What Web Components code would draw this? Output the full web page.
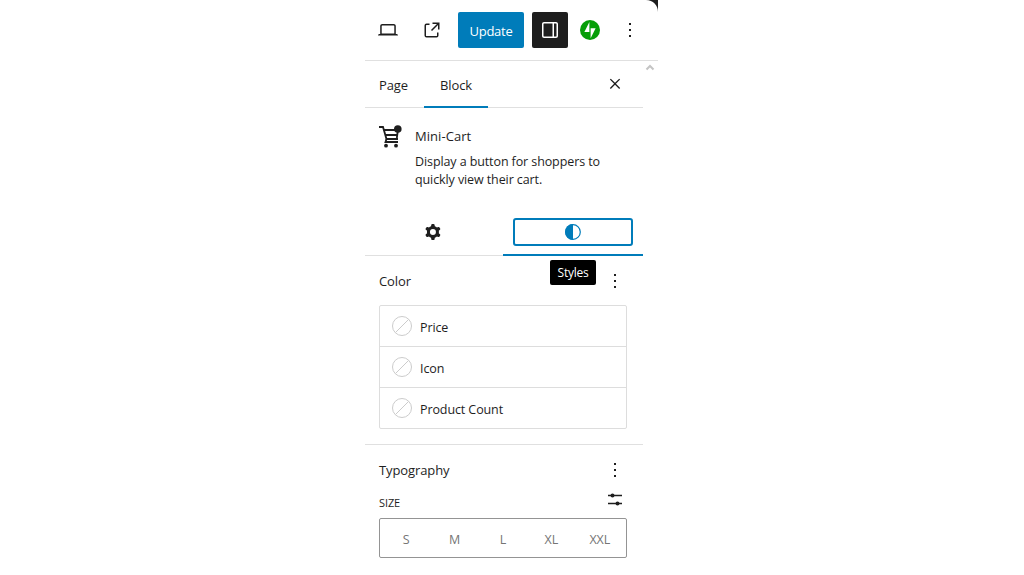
<!DOCTYPE html>
<html><head><meta charset="utf-8">
<style>
html,body{margin:0;background:#fff;height:100%;overflow:hidden}
body{font-family:"Open Sans","Noto Sans",sans-serif;font-size:12.5px;letter-spacing:-.1px;color:#1e1e1e}
</style></head><body>
<wp-app>
<top-bar></top-bar>
<side-panel>
<panel-tabs></panel-tabs>
<block-card></block-card>
<inspector-tabs></inspector-tabs>
<color-panel></color-panel>
<type-panel></type-panel>
</side-panel>
</wp-app>
<script>
const DOTS='<svg width="24" height="24" viewBox="0 0 24 24" fill="#1e1e1e"><path d="M13 19h-2v-2h2v2zm0-6h-2v-2h2v2zm0-6h-2V5h2v2z"/></svg>';
function def(name,html){customElements.define(name,class extends HTMLElement{constructor(){super();this.attachShadow({mode:'open'}).innerHTML=html;}});}
def('wp-app',`<style>:host{display:block;width:293px;margin-left:365px;position:relative;height:575px;overflow:hidden}
.corner{position:absolute;right:0;top:0;display:block}
.chev{position:absolute;left:280px;top:63px}</style>
<svg class="corner" width="12" height="12" viewBox="0 0 12 12"><path d="M0 0H12V12C12 5 7 0 0 0z" fill="#1e1e1e"/></svg>
<slot></slot>
<svg class="chev" width="10" height="8" viewBox="0 0 10 8"><path d="M1.5 6.500 5 3l3.500 3.500" fill="none" stroke="#c4c4c4" stroke-width="2"/></svg>`);
def('top-bar',`<style>:host{display:flex;align-items:center;height:60px;border-bottom:1px solid #e0e0e0;box-sizing:content-box}
.ic{width:24px;height:24px;display:block}
.a{margin-left:11px}.b{margin-left:20px}
.u{margin-left:14px;width:66px;height:36px;padding-top:2px;box-sizing:border-box;background:#007cba;color:#fff;border-radius:2px;display:flex;align-items:center;justify-content:center;font-size:13px;letter-spacing:-.25px}
.s{margin-left:8px;width:36px;height:36px;background:#1e1e1e;border-radius:2px;display:flex;align-items:center;justify-content:center}
.j{margin-left:12px;width:20px;height:20px;display:block}
.d{margin-left:18px;width:24px;height:24px}</style>
<svg class="ic a" viewBox="0 0 24 24" fill="#1e1e1e"><path d="M20.5 16h-.7V8c0-1.1-.9-2-2-2H6.2c-1.1 0-2 .9-2 2v8h-.7c-.8 0-1.5.7-1.5 1.5h20c0-.8-.7-1.5-1.5-1.5zM5.700 8c0-.3.2-.5.5-.5h11.600c.3 0 .5.2.5.5v7.600H5.700V8z"/></svg>
<svg class="ic b" viewBox="0 0 24 24" fill="#1e1e1e"><path d="M19.500 4.500h-7V6h4.440l-5.970 6.030 1.060 1.060L18 7.060v4.440h1.500v-7zm-13 1a2 2 0 0 0-2 2v10a2 2 0 0 0 2 2h10a2 2 0 0 0 2-2v-3H17v3a.5.5 0 0 1-.5.5h-10a.5.5 0 0 1-.5-.5v-10a.5.5 0 0 1 .5-.5h3V5.500h-3z"/></svg>
<div class="u">Update</div>
<div class="s"><svg class="ic" viewBox="0 0 24 24" fill="#fff"><path d="M18 4H6c-1.100 0-2 .9-2 2v12c0 1.100.9 2 2 2h12c1.100 0 2-.9 2-2V6c0-1.100-.9-2-2-2zM6 18.500c-.3 0-.5-.2-.5-.5V6c0-.3.2-.5.5-.5h8.500v13H6zm12.500-.5c0 .3-.2.500-.5.500h-2v-13h2c.3 0 .5.2.5.5v12z"/></svg></div>
<svg class="j" viewBox="0 0 32 32"><circle cx="16" cy="16" r="16" fill="#069e08"/><polygon fill="#fff" points="15,19 7,19 15,3"/><polygon fill="#fff" points="17,29 17,13 25,13"/></svg>
<div class="d">${DOTS}</div>`);
def('side-panel',`<style>:host{display:block;width:278px}</style><slot></slot>`);
def('panel-tabs',`<style>:host{display:flex;height:46px;border-bottom:1px solid #e0e0e0;align-items:stretch;position:relative}
.t{display:flex;align-items:center;box-sizing:border-box;height:47px;padding-top:1px}
.p{margin-left:14px;width:45px;font-size:13px;letter-spacing:-.15px}
.k{width:64px;justify-content:center;border-bottom:2px solid #007cba;margin-bottom:-1px;font-weight:500;font-size:13px;letter-spacing:-.1px;padding-top:3px}
svg{margin:11px 0 0 auto;margin-right:16px;display:block}</style>
<div class="t p">Page</div><div class="t k">Block</div>
<svg width="24" height="24" viewBox="0 0 24 24" fill="#1e1e1e"><path d="M13 11.800l4.400-4.400-1-1-4.400 4.400-4.400-4.400-1 1 4.400 4.400-4.400 4.400 1 1 4.400-4.400 4.400 4.400 1-1z" transform="translate(12 11.800) scale(.95) translate(-12 -11.800)"/></svg>`);
def('block-card',`<style>:host{display:flex;padding:16px 14px 0 13px;height:94px;box-sizing:content-box}
svg{flex:none;display:block;margin-right:13px}
h2{margin:2px 0 7px;font-size:13px;letter-spacing:.05px;line-height:20px;font-weight:500}
p{margin:0;line-height:18px;width:205px}</style>
<svg width="24" height="24" viewBox="0 0 24 24" fill="none" stroke="#1e1e1e"><path d="M1 3H5L8.500 15H20" stroke-width="1.800"/><path d="M6 6H18M7.500 11H19" stroke-width="1.800"/><path d="M19.800 7 18.800 14" stroke-width="1.800"/><path d="M8.500 15 7.500 18H20" stroke-width="1.800"/><circle cx="8" cy="21.700" r="1.900" fill="#1e1e1e" stroke="none"/><circle cx="18" cy="21.700" r="1.900" fill="#1e1e1e" stroke="none"/><circle cx="19.800" cy="5" r="3.800" fill="#1e1e1e" stroke="none"/></svg>
<div><h2>Mini-Cart</h2><p>Display a button for shoppers to quickly view their cart.</p></div>`);
def('inspector-tabs',`<style>:host{display:flex;height:37px;border-bottom:1px solid #e0e0e0;position:relative;box-sizing:content-box}
.g{width:136px;display:flex;justify-content:center;box-sizing:border-box;padding-top:2px}
.s{box-sizing:border-box;border-bottom:2px solid #007cba;height:38px;margin-bottom:-1px;padding:0 10px;width:140px;margin-left:2px}
.f{width:120px;height:28px;border:2px solid #007cba;border-radius:3px;box-sizing:border-box;display:flex;align-items:center;justify-content:center}
svg{display:block}</style>
<div class="g"><svg width="24" height="24" viewBox="0 0 24 24" fill="#1e1e1e"><path fill-rule="evenodd" d="M10.289 4.836A1 1 0 0 1 11.275 4h1.306a1 1 0 0 1 .987.836l.244 1.466c.787.26 1.503.679 2.108 1.218l1.393-.522a1 1 0 0 1 1.216.437l.653 1.130a1 1 0 0 1-.23 1.273l-1.148.944a6.025 6.025 0 0 1 0 2.435l1.149.946a1 1 0 0 1 .23 1.272l-.653 1.130a1 1 0 0 1-1.216.437l-1.394-.522c-.605.54-1.320.958-2.108 1.218l-.244 1.466a1 1 0 0 1-.987.836h-1.306a1 1 0 0 1-.986-.836l-.244-1.466a5.995 5.995 0 0 1-2.108-1.218l-1.394.522a1 1 0 0 1-1.217-.436l-.653-1.131a1 1 0 0 1 .23-1.272l1.149-.946a6.026 6.026 0 0 1 0-2.435l-1.148-.944a1 1 0 0 1-.23-1.272l.653-1.131a1 1 0 0 1 1.217-.437l1.393.522a5.994 5.994 0 0 1 2.108-1.218l.244-1.466zM14.929 12a3 3 0 1 1-6 0 3 3 0 0 1 6 0z"/></svg></div>
<div class="s"><div class="f"><svg width="24" height="24" viewBox="0 0 24 24"><circle cx="12" cy="12" r="7.300" fill="#fff" stroke="#007cba" stroke-width="1.200"/><path d="M12 4a8 8 0 0 0 0 16z" fill="#007cba"/></svg></div></div>`);
def('panel-head',`<style>:host{display:flex;align-items:center;justify-content:space-between;height:24px;font-weight:500;font-size:13px;letter-spacing:-.1px}
svg,div{display:block}</style><span><slot></slot></span><div>${DOTS}</div>`);
def('color-row',`<style>:host{display:flex;align-items:center;height:40px;padding-left:12px}
:host(:not(:last-child)){border-bottom:1px solid #ddd}
svg{display:block;margin-right:8px}
span{padding-top:2px}</style>
<svg width="20" height="20" viewBox="0 0 20 20"><circle cx="10" cy="10" r="9.500" fill="#fff" stroke="#ccc"/><path d="M3.500 16.500 16.500 3.500" stroke="#ccc"/></svg><span><slot></slot></span>`);
def('color-panel',`<style>:host{display:block;padding:13px 14px 15px;border-bottom:1px solid #e0e0e0;position:relative;height:160px}
.list{margin-top:12px;width:248px;border:1px solid #ddd;border-radius:2px;box-sizing:border-box;height:124px}
.tip{position:absolute;left:185px;top:4px;width:46px;height:25px;background:#000;color:#fff;border-radius:2px;font-size:12px;letter-spacing:-.25px;display:flex;align-items:center;justify-content:center}</style>
<panel-head style="display:flex;width:248px">Color</panel-head>
<div class="list"><color-row>Price</color-row><color-row>Icon</color-row><color-row>Product Count</color-row></div>
<div class="tip">Styles</div>`);
def('type-panel',`<style>:host{display:block;padding:13px 14px 0}
.size{display:flex;justify-content:space-between;margin-top:12px;height:24px;width:248px;font-size:11px;font-weight:500;text-transform:uppercase}
.size span{padding-top:1px}
.seg{width:248px;height:40px;box-sizing:border-box;border:1px solid #949494;border-radius:2px;display:grid;grid-template-columns:repeat(5,1fr);padding:2px 2px 0;align-items:center;text-align:center;color:#757575;font-size:12.5px}
svg{display:block;margin-top:-6px}</style>
<panel-head style="display:flex;width:248px">Typography</panel-head>
<div class="size"><span>Size</span><svg width="24" height="24" viewBox="0 0 24 24" fill="#1e1e1e"><path d="M5 6.700H19V8.200H5zM5 14.800H19V16.300H5z"/><circle cx="9.500" cy="7.500" r="2"/><circle cx="14.500" cy="15.500" r="2"/></svg></div>
<div class="seg"><span>S</span><span>M</span><span>L</span><span>XL</span><span>XXL</span></div>`);
</script>
</body></html>
